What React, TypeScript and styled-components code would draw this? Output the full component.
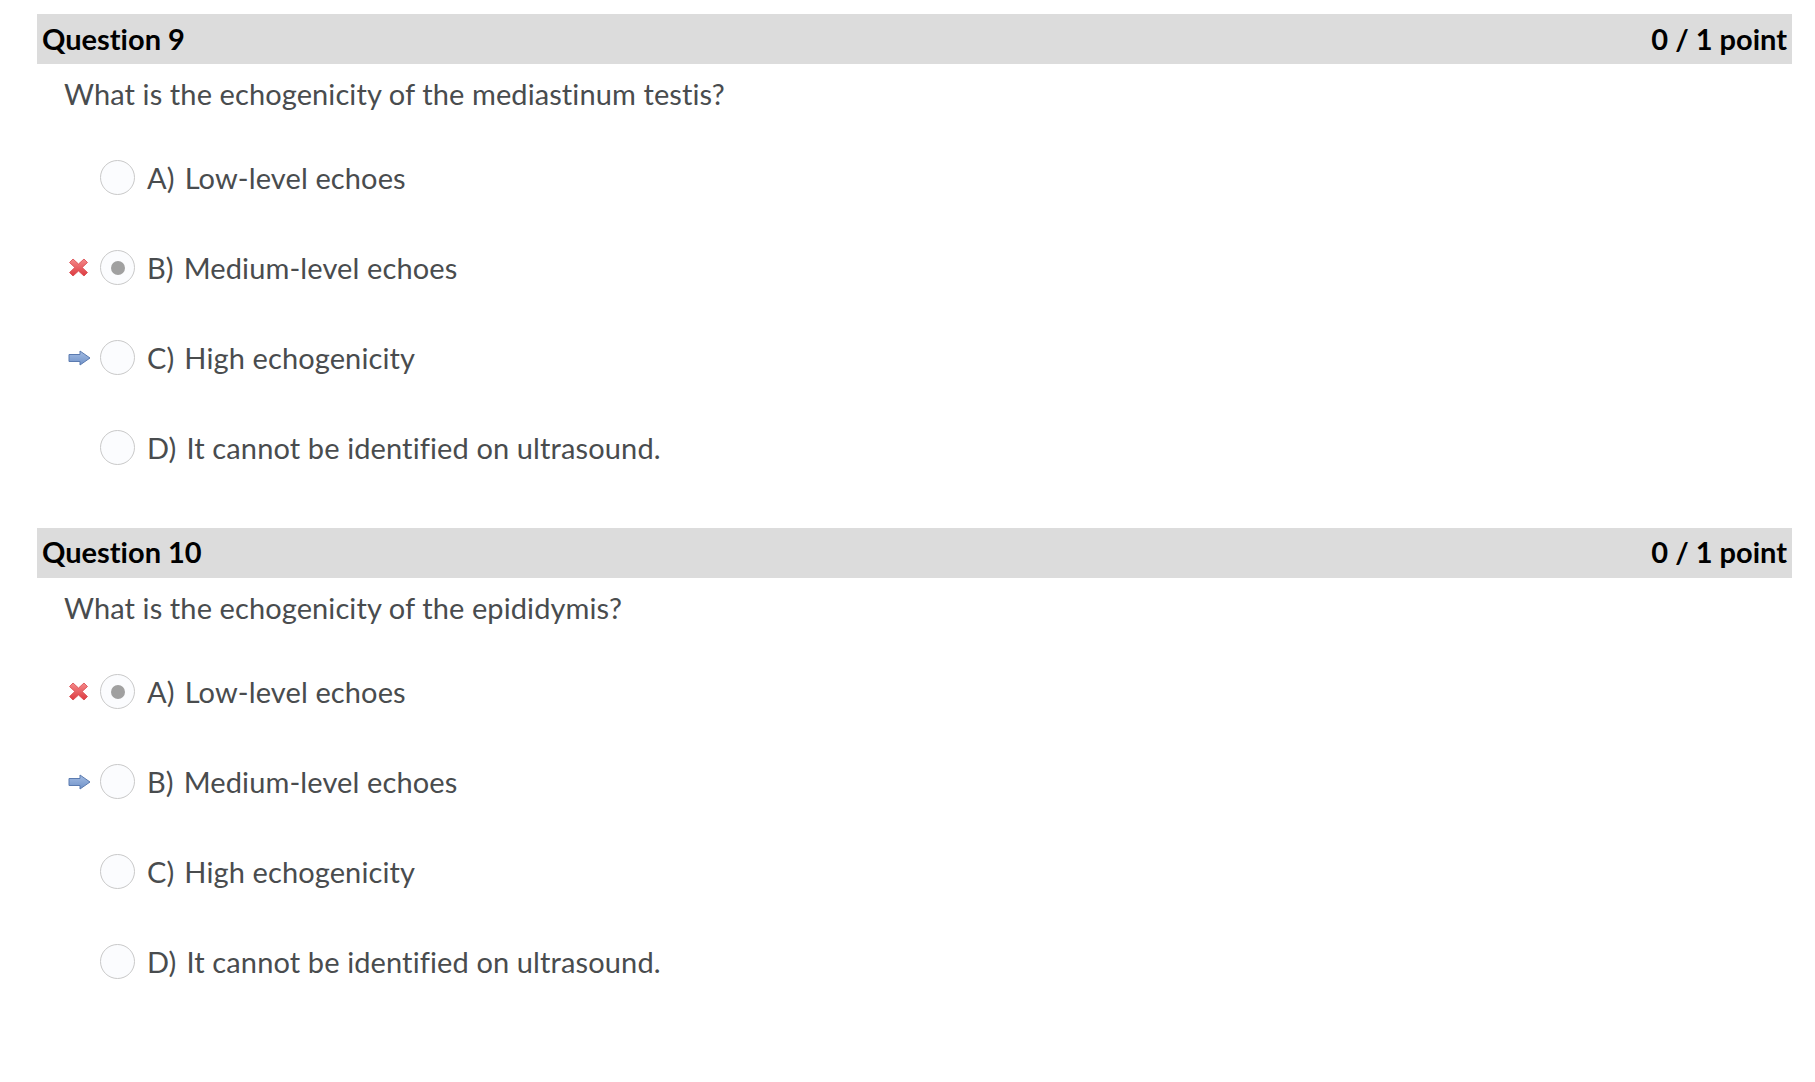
import React from "react";
import styled, { createGlobalStyle } from "styled-components";

const Global = createGlobalStyle`
  html, body { margin: 0; padding: 0; background: #ffffff; }
  body {
    font-family: Lato, "Open Sans", "Liberation Sans", sans-serif;
    font-variant-ligatures: none;
    font-feature-settings: "liga" 0, "clig" 0;
  }
`;

const Page = styled.div`
  padding: 14px 23px 0 37px;
  display: flex;
  flex-direction: column;
  gap: 35px;
`;

const Section = styled.section`
  display: flex;
  flex-direction: column;
`;

const Header = styled.div`
  height: 50px;
  background: #dcdcdc;
  display: flex;
  align-items: center;
  justify-content: space-between;
  padding: 0 5px 2px 5px;
  font-size: 29px;
  font-weight: 700;
  color: #000000;
  line-height: 1;
  box-sizing: border-box;
`;

const Prompt = styled.div`
  margin: 13px 0 21px 27px;
  font-size: 29px;
  line-height: 1.2;
  letter-spacing: 0.1px;
  color: #494c4e;
`;

const Options = styled.div`
  display: flex;
  flex-direction: column;
`;

const Row = styled.div`
  height: 90px;
  display: flex;
  align-items: center;
  padding-left: 31px;
`;

const Mark = styled.span`
  width: 32px;
  display: flex;
  align-items: center;
  justify-content: flex-start;
`;

const Radio = styled.span<{ $checked?: boolean }>`
  width: 33px;
  height: 33px;
  border-radius: 50%;
  border: 1px solid #c9c9c9;
  background: #fbfcfe;
  display: flex;
  align-items: center;
  justify-content: center;
  flex-shrink: 0;
  &::after {
    content: "";
    display: ${(p) => (p.$checked ? "block" : "none")};
    width: 14px;
    height: 14px;
    border-radius: 50%;
    background: #a0a0a0;
  }
`;

const Label = styled.span`
  margin-left: 12px;
  font-size: 29px;
  letter-spacing: 0.12px;
  color: #494c4e;
  display: flex;
  gap: 10px;
`;

const CrossIcon = () => (
  <svg width="21" height="19" viewBox="0 0 21 19">
    <defs>
      <linearGradient id="xg" x1="0" y1="0" x2="0" y2="1">
        <stop offset="0" stopColor="#f58a8a" />
        <stop offset="1" stopColor="#dc3a40" />
      </linearGradient>
    </defs>
    <path
      d="M1.5 4.5 L5 1 L10.5 6 L16 1 L19.5 4.5 L14.2 9.5 L19.5 14.5 L16 18 L10.5 13 L5 18 L1.5 14.5 L6.8 9.5 Z"
      fill="url(#xg)"
      stroke="#d9464b"
      strokeWidth="0.8"
      strokeLinejoin="round"
    />
  </svg>
);

const ArrowIcon = () => (
  <svg width="23" height="16" viewBox="0 0 23 16">
    <defs>
      <linearGradient id="ag" x1="0" y1="0" x2="0" y2="1">
        <stop offset="0" stopColor="#a3bce3" />
        <stop offset="1" stopColor="#7092c8" />
      </linearGradient>
    </defs>
    <path
      d="M1 4.5 H12 V1 L22 8 L12 15 V11.5 H1 Z"
      fill="url(#ag)"
      stroke="#5b7bb0"
      strokeWidth="1"
      strokeLinejoin="round"
    />
  </svg>
);

type Opt = { letter: string; text: string; mark?: "wrong" | "correct"; checked?: boolean };
type Q = { title: string; prompt: string; options: Opt[] };

const questions: Q[] = [
  {
    title: "Question 9",
    prompt: "What is the echogenicity of the mediastinum testis?",
    options: [
      { letter: "A)", text: "Low-level echoes" },
      { letter: "B)", text: "Medium-level echoes", mark: "wrong", checked: true },
      { letter: "C)", text: "High echogenicity", mark: "correct" },
      { letter: "D)", text: "It cannot be identified on ultrasound." },
    ],
  },
  {
    title: "Question 10",
    prompt: "What is the echogenicity of the epididymis?",
    options: [
      { letter: "A)", text: "Low-level echoes", mark: "wrong", checked: true },
      { letter: "B)", text: "Medium-level echoes", mark: "correct" },
      { letter: "C)", text: "High echogenicity" },
      { letter: "D)", text: "It cannot be identified on ultrasound." },
    ],
  },
];

export default function App() {
  return (
    <>
      <Global />
      <Page>
        {questions.map((q) => (
          <Section key={q.title}>
            <Header>
              <span>{q.title}</span>
              <span>0 / 1 point</span>
            </Header>
            <Prompt>{q.prompt}</Prompt>
            <Options>
              {q.options.map((o) => (
                <Row key={o.letter}>
                  <Mark>
                    {o.mark === "wrong" && <CrossIcon />}
                    {o.mark === "correct" && <ArrowIcon />}
                  </Mark>
                  <Radio $checked={o.checked} />
                  <Label>
                    <span>{o.letter}</span>
                    <span>{o.text}</span>
                  </Label>
                </Row>
              ))}
            </Options>
          </Section>
        ))}
      </Page>
    </>
  );
}
